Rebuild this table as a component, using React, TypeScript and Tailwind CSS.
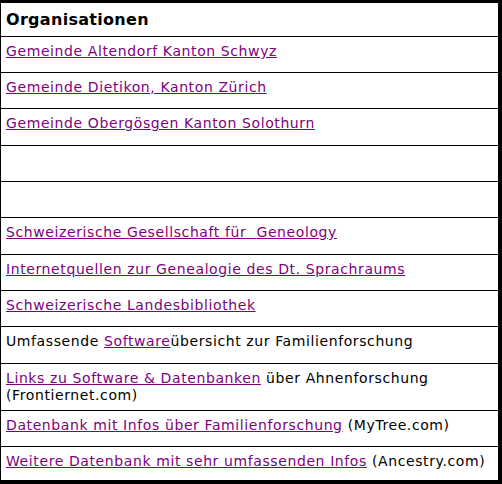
const link = 'text-[#800080] underline underline-offset-[1px]';

type Row = { h: string; content: React.ReactNode };

const rows: Row[] = [
  { h: 'h-[36px]', content: <a className={link}>Gemeinde Altendorf Kanton Schwyz</a> },
  { h: 'h-[36px]', content: <a className={link}>Gemeinde Dietikon, Kanton Zürich</a> },
  { h: 'h-[37px]', content: <a className={link}>Gemeinde Obergösgen Kanton Solothurn</a> },
  { h: 'h-[36px]', content: null },
  { h: 'h-[36px]', content: null },
  { h: 'h-[37px]', content: <a className={link}>Schweizerische Gesellschaft für{'\u00a0 '}Geneology</a> },
  { h: 'h-[36px]', content: <a className={link}>Internetquellen zur Genealogie des Dt. Sprachraums</a> },
  { h: 'h-[36px]', content: <a className={link}>Schweizerische Landesbibliothek</a> },
  {
    h: 'h-[37px]',
    content: (
      <>
        Umfassende <a className={link}>Software</a>übersicht zur Familienforschung
      </>
    ),
  },
  {
    h: 'h-[47px]',
    content: (
      <>
        <a className={link}>Links zu Software &amp; Datenbanken</a> <span>über Ahnenforschung</span>
        <br />
        <span>(Frontiernet.com)</span>
      </>
    ),
  },
  {
    h: 'h-[36px]',
    content: (
      <>
        <a className={link}>Datenbank mit Infos über Familienforschung</a> (MyTree.com)
      </>
    ),
  },
  {
    h: 'h-[33px]',
    content: (
      <>
        <a className={link}>Weitere Datenbank mit sehr umfassenden Infos</a> (Ancestry.com)
      </>
    ),
  },
];

const App = () => {
  return (
    <div className="w-[502px] h-[484px] bg-white font-['DejaVu_Sans',sans-serif] text-[14px] leading-[17px] tracking-[0.6px] text-black">
      <div className="border-t-[3px] border-l border-r-[4px] border-b-[4px] border-black flex flex-col">
        <div className="h-[34px] border-b border-black pl-[5px] pt-[8px] font-bold text-[16px] tracking-[0.3px]">
          Organisationen
        </div>
        {rows.map((r, i) => (
          <div
            key={i}
            className={`${r.h} pl-[5px] pr-2 pt-[6px] ${i < rows.length - 1 ? 'border-b border-black' : ''}`}
          >
            {r.content}
          </div>
        ))}
      </div>
    </div>
  );
};

export default App;
